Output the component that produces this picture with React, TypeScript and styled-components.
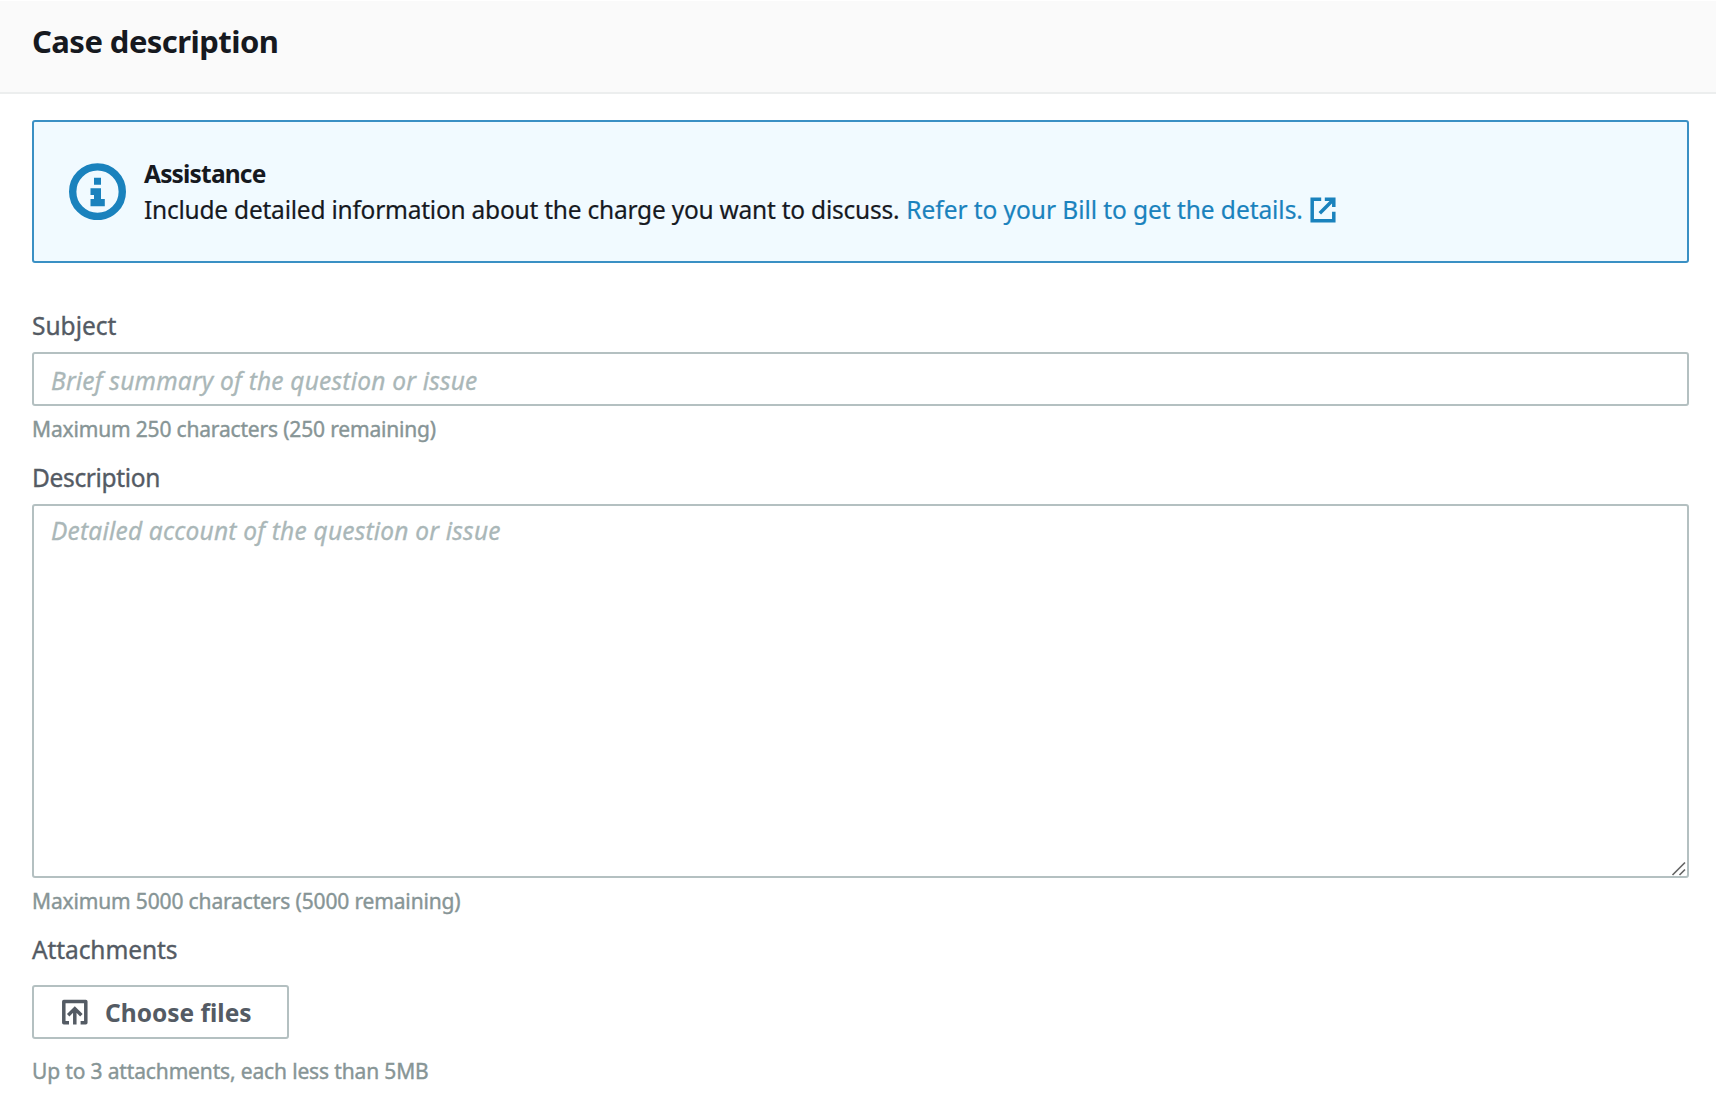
import React from 'react';
import styled, { createGlobalStyle } from 'styled-components';

const GlobalStyle = createGlobalStyle`
  * { box-sizing: border-box; }
  body {
    margin: 0;
    background: #fff;
    color: #16191f;
    font-family: "Noto Sans", "Open Sans", sans-serif;
  }
`;

const Panel = styled.main`
  width: 1716px;
  min-height: 1108px;
  padding-top: 1px;
  background: #fff;
`;

const Header = styled.header`
  height: 93px;
  padding: 18px 32px 0;
  background: #fafafa;
  border-bottom: 2px solid #eceeee;
`;

const Title = styled.h2<{ $tracking: number }>`
  margin: 0;
  font-size: 31px;
  line-height: 44px;
  font-weight: 700;
  letter-spacing: ${(p) => p.$tracking}px;
  white-space: nowrap;
`;

const Body = styled.div`
  display: flex;
  flex-direction: column;
  align-items: flex-start;
  padding: 26px 27px 0 32px;
`;

const Alert = styled.section`
  display: flex;
  align-items: flex-start;
  gap: 18px;
  width: 100%;
  height: 143px;
  padding: 34px 35px 0;
  background: #f1faff;
  border: 2px solid #3a90c4;
  border-radius: 3px;
`;

const InfoIcon = styled.svg`
  flex: none;
  width: 57px;
  height: 57px;
  margin-top: 7px;
`;

const AlertText = styled.div`
  display: flex;
  flex-direction: column;
`;

const AlertTitle = styled.strong<{ $tracking: number }>`
  font-size: 24.5px;
  line-height: 36px;
  font-weight: 700;
  letter-spacing: ${(p) => p.$tracking}px;
`;

const AlertLine = styled.div`
  display: flex;
  align-items: center;
  gap: 7px;
  font-size: 24.5px;
  line-height: 36px;
  white-space: nowrap;
  -webkit-text-stroke: 0.2px currentColor;
`;

const Sentence = styled.span<{ $tracking: number }>`
  letter-spacing: ${(p) => p.$tracking}px;
`;

const Link = styled.a<{ $tracking: number }>`
  display: flex;
  align-items: center;
  gap: 7px;
  color: #1a82bd;
  text-decoration: none;
  letter-spacing: ${(p) => p.$tracking}px;
`;

const LinkIcon = styled.svg`
  width: 26px;
  height: 26px;
  margin-top: -1px;
`;

const Label = styled.label<{ $top: number; $tracking: number }>`
  margin-top: ${(p) => p.$top}px;
  font-size: 24.5px;
  line-height: 36px;
  color: #545b64;
  letter-spacing: ${(p) => p.$tracking}px;
  -webkit-text-stroke: 0.35px currentColor;
`;

const Input = styled.input`
  width: 100%;
  height: 54px;
  margin-top: 8px;
  padding: 3px 17px 0;
  border: 2px solid #b4c0c1;
  border-radius: 3px;
  outline: none;
  font: italic 24.5px "Noto Sans", "Open Sans", sans-serif;
  letter-spacing: 0.2px;
  &::placeholder { color: #aab7b8; opacity: 1; -webkit-text-stroke: 0.3px #aab7b8; }
`;

const AreaWrap = styled.div`
  position: relative;
  width: 100%;
  height: 374px;
  margin-top: 8px;
`;

const Area = styled.textarea`
  display: block;
  width: 100%;
  height: 100%;
  padding: 7px 17px;
  border: 2px solid #b4c0c1;
  border-radius: 3px;
  outline: none;
  resize: none;
  font: italic 24.5px/36px "Noto Sans", "Open Sans", sans-serif;
  letter-spacing: 0.2px;
  &::placeholder { color: #aab7b8; opacity: 1; -webkit-text-stroke: 0.3px #aab7b8; }
`;

const Grip = styled.svg`
  position: absolute;
  right: 3px;
  bottom: 2px;
  width: 15px;
  height: 15px;
  pointer-events: none;
`;

const Hint = styled.p<{ $top: number; $tracking: number }>`
  margin: ${(p) => p.$top}px 0 0;
  font-size: 21px;
  line-height: 32px;
  color: #879596;
  letter-spacing: ${(p) => p.$tracking}px;
  -webkit-text-stroke: 0.4px currentColor;
`;

const Button = styled.button<{ $tracking: number }>`
  display: flex;
  align-items: center;
  gap: 17px;
  width: 257px;
  height: 54px;
  margin-top: 17px;
  padding: 0 0 0 28px;
  background: #fff;
  border: 2px solid #b4c0c1;
  border-radius: 3px;
  color: #545b64;
  font: 700 24.5px "Noto Sans", "Open Sans", sans-serif;
  letter-spacing: ${(p) => p.$tracking}px;
  white-space: nowrap;
`;

const UploadIcon = styled.svg`
  flex: none;
  width: 26px;
  height: 26px;
`;

export default function App() {
  return (
    <Panel>
      <GlobalStyle />
      <Header>
        <Title $tracking={-0.55}>Case description</Title>
      </Header>
      <Body>
        <Alert>
          <InfoIcon viewBox="0 0 57 57">
            <circle cx="28.5" cy="28.7" r="24.8" fill="none" stroke="#1a82bd" strokeWidth="7.4" />
            <path fill="#1a82bd" d="M25 14.7H32V21.8H25ZM21.5 25.3H32V36H35.8V43.2H21.5V36H25V32H21.5Z" />
          </InfoIcon>
          <AlertText>
            <AlertTitle $tracking={-0.82}>Assistance</AlertTitle>
            <AlertLine>
              <Sentence $tracking={-0.23}>Include detailed information about the charge you want to discuss.</Sentence>
              <Link $tracking={-0.06} href="#">
                Refer to your Bill to get the details.
                <LinkIcon viewBox="0 0 26 26" fill="none" stroke="#1a82bd" strokeWidth="3.5">
                  <path d="M11.2 2.2H2.2V23.8H23.8V14.8M14.8 2.2H23.8V10M23.5 2.5L9.8 16.2" />
                </LinkIcon>
              </Link>
            </AlertLine>
          </AlertText>
        </Alert>
        <Label $top={45} $tracking={0} htmlFor="subject">Subject</Label>
        <Input id="subject" placeholder="Brief summary of the question or issue" />
        <Hint $top={7} $tracking={-0.17}>Maximum 250 characters (250 remaining)</Hint>
        <Label $top={15} $tracking={-0.35} htmlFor="description">Description</Label>
        <AreaWrap>
          <Area id="description" placeholder="Detailed account of the question or issue" />
          <Grip viewBox="0 0 15 15" fill="none" stroke="#666" strokeWidth="1.7">
            <path d="M1.5 14L14 1.5M8.5 14L14 8.5" />
          </Grip>
        </AreaWrap>
        <Hint $top={7} $tracking={-0.15}>Maximum 5000 characters (5000 remaining)</Hint>
        <Label $top={15} $tracking={-0.1} as="div">Attachments</Label>
        <Button $tracking={0} type="button">
          <UploadIcon viewBox="0 0 26 26" fill="none" stroke="#545b64" strokeWidth="3.5" strokeLinejoin="round">
            <path d="M7 23.8H1.8V2.4H23.8V23.8H18.6" />
            <path d="M12.8 25.6V9.5M6.2 16.2L12.8 9.6L19.4 16.2" strokeLinejoin="miter" />
          </UploadIcon>
          Choose files
        </Button>
        <Hint $top={16} $tracking={-0.15}>Up to 3 attachments, each less than 5MB</Hint>
      </Body>
    </Panel>
  );
}
